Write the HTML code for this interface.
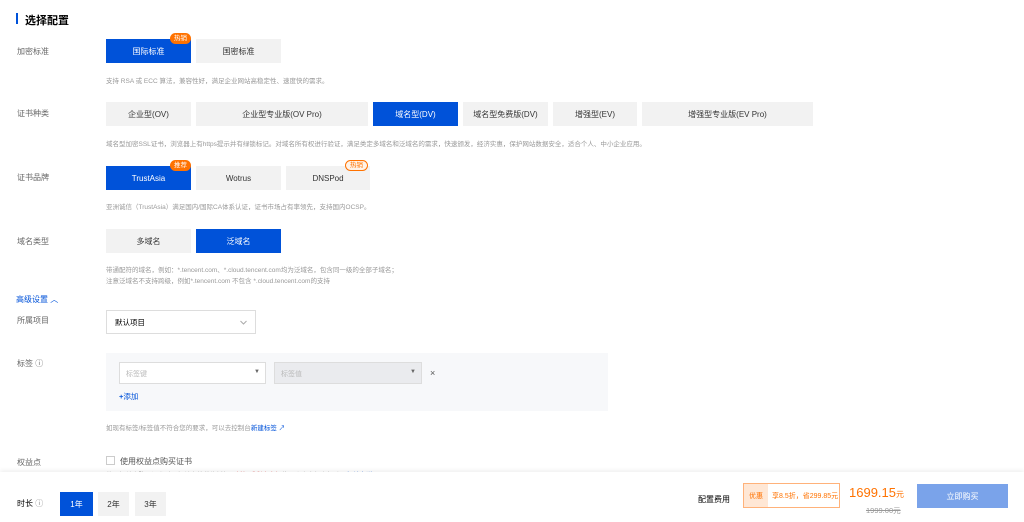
<!DOCTYPE html><html><head><meta charset="utf-8"><style>
*{box-sizing:border-box;margin:0;padding:0}
body{width:1024px;height:522px;overflow:hidden;background:#fff;font-family:"Liberation Sans","Noto Sans CJK SC",sans-serif;font-size:8px;color:#333;position:relative}
.a{position:absolute}
.lb{position:absolute;left:17px;color:#666;font-size:8px}
.b{position:absolute;height:24px;background:#f2f2f2;color:#333;font-size:8px;display:flex;align-items:center;justify-content:center}
.on{background:#0052d9;color:#fff}
.d{position:absolute;left:106px;color:#999;font-size:6.5px}
.tag{position:absolute;top:-6px;height:11px;padding:0 4px;border-radius:6px;background:#ff7200;color:#fff;font-size:6.5px;line-height:11px}
.tag.o{background:#fff3e8;color:#ff7200;border:1px solid #ff7200;line-height:9px}
</style></head><body>
<div class="a" style="left:16px;top:13px;width:2px;height:11px;background:#0052d9"></div>
<div class="a" style="left:25px;top:12px;font-size:11px;font-weight:bold;color:#000">选择配置</div>

<div class="lb" style="top:46px">加密标准</div>
<div class="b on" style="left:106px;top:39px;width:85px">国际标准<span class="tag" style="right:0">热销</span></div>
<div class="b" style="left:196px;top:39px;width:85px">国密标准</div>
<div class="d" style="top:75px">支持 RSA 或 ECC 算法，兼容性好，满足企业网站高稳定性、速度快的需求。</div>

<div class="lb" style="top:108px">证书种类</div>
<div class="b" style="left:106px;top:102px;width:85px">企业型(OV)</div>
<div class="b" style="left:196px;top:102px;width:172px">企业型专业版(OV Pro)</div>
<div class="b on" style="left:373px;top:102px;width:85px">域名型(DV)</div>
<div class="b" style="left:463px;top:102px;width:85px">域名型免费版(DV)</div>
<div class="b" style="left:553px;top:102px;width:84px">增强型(EV)</div>
<div class="b" style="left:642px;top:102px;width:171px">增强型专业版(EV Pro)</div>
<div class="d" style="top:138px">域名型加密SSL证书，浏览器上有https提示并有绿锁标记。对域名所有权进行验证，满足类定多域名和泛域名的需求，快速颁发，经济实惠，保护网站数据安全，适合个人、中小企业应用。</div>

<div class="lb" style="top:172px">证书品牌</div>
<div class="b on" style="left:106px;top:166px;width:85px">TrustAsia<span class="tag" style="right:0">推荐</span></div>
<div class="b" style="left:196px;top:166px;width:85px">Wotrus</div>
<div class="b" style="left:286px;top:166px;width:84px">DNSPod<span class="tag o" style="right:2px">热销</span></div>
<div class="d" style="top:201px">亚洲诚信（TrustAsia）满足国内/国际CA体系认证，证书市场占有率领先，支持国内OCSP。</div>

<div class="lb" style="top:236px">域名类型</div>
<div class="b" style="left:106px;top:229px;width:85px">多域名</div>
<div class="b on" style="left:196px;top:229px;width:85px">泛域名</div>
<div class="d" style="top:264px">带通配符的域名，例如：*.tencent.com、*.cloud.tencent.com均为泛域名，包含同一级的全部子域名；</div>
<div class="d" style="top:275px">注意泛域名不支持跨级，例如*.tencent.com 不包含 *.cloud.tencent.com的支持</div>

<div class="a" style="left:16px;top:294px;color:#0052d9;font-size:8px">高级设置 ︿</div>
<div class="lb" style="top:315px">所属项目</div>
<div class="a" style="left:106px;top:310px;width:150px;height:24px;border:1px solid #ddd;padding:6px 8px;font-size:7.5px;color:#000">默认项目<svg style="position:absolute;right:8px;top:9px" width="7" height="5" viewBox="0 0 7 5"><path d="M.5 1 3.5 4 6.5 1" fill="none" stroke="#aaa" stroke-width="1"/></svg></div>

<div class="lb" style="top:358px">标签 ⓘ</div>
<div class="a" style="left:106px;top:353px;width:502px;height:58px;background:#f7f8fa"></div>
<div class="a" style="left:119px;top:362px;width:147px;height:22px;background:#fff;border:1px solid #ddd;padding:6px;color:#bbb;font-size:7px">标签键<span style="position:absolute;right:5px;top:6px;color:#666;font-size:6px">▼</span></div>
<div class="a" style="left:274px;top:362px;width:148px;height:22px;background:#eaebee;border:1px solid #ddd;padding:6px;color:#bbb;font-size:7px">标签值<span style="position:absolute;right:5px;top:6px;color:#666;font-size:6px">▼</span></div>
<div class="a" style="left:430px;top:368px;color:#555;font-size:9px">×</div>
<div class="a" style="left:119px;top:391px;color:#0052d9;font-size:7.5px"><b>+</b>添加</div>
<div class="d" style="top:422px">如现有标签/标签值不符合您的要求，可以去控制台<span style="color:#0052d9">新建标签 ↗</span></div>

<div class="lb" style="top:457px">权益点</div>
<div class="a" style="left:106px;top:456px;width:9px;height:9px;border:1px solid #ccc;background:#fff"></div>
<div class="a" style="left:120px;top:456px;font-size:8px;color:#555">使用权益点购买证书</div>
<div class="d" style="top:469px">使用权益点购买证书时，权益点将优先抵扣，<span style="color:#e54545">抵扣后剩余金额</span>将从账户余额中扣除，<span style="color:#0052d9">权益点说明 ↗</span></div>

<div class="a" style="left:0;top:472px;width:1024px;height:50px;background:#fff;box-shadow:0 -2px 4px rgba(0,0,0,.06)"></div>
<div class="a" style="left:17px;top:498px;font-size:8px;color:#000">时长 <span style="color:#888">ⓘ</span></div>
<div class="b on" style="left:60px;top:492px;width:33px">1年</div>
<div class="b" style="left:98px;top:492px;width:31px">2年</div>
<div class="b" style="left:135px;top:492px;width:31px">3年</div>
<div class="a" style="left:698px;top:494px;font-size:8px;color:#000">配置费用</div>
<div class="a" style="left:743px;top:483px;width:97px;height:25px;border:1px solid #ffb27a;display:flex;align-items:center;font-size:7px;color:#ff7200"><span style="background:#ffe7d5;height:100%;padding:0 5px;display:flex;align-items:center">优惠</span><span style="padding-left:4px">享8.5折，省299.85元</span></div>
<div class="a" style="left:849px;top:485px;font-size:13px;color:#ff7200">1699.15<span style="font-size:8px">元</span></div>
<div class="a" style="left:866px;top:505px;font-size:7.5px;color:#999;text-decoration:line-through">1999.00元</div>
<div class="a" style="left:917px;top:484px;width:91px;height:24px;background:#7aa3ea;color:#fff;font-size:8px;display:flex;align-items:center;justify-content:center">立即购买</div>
</body></html>
